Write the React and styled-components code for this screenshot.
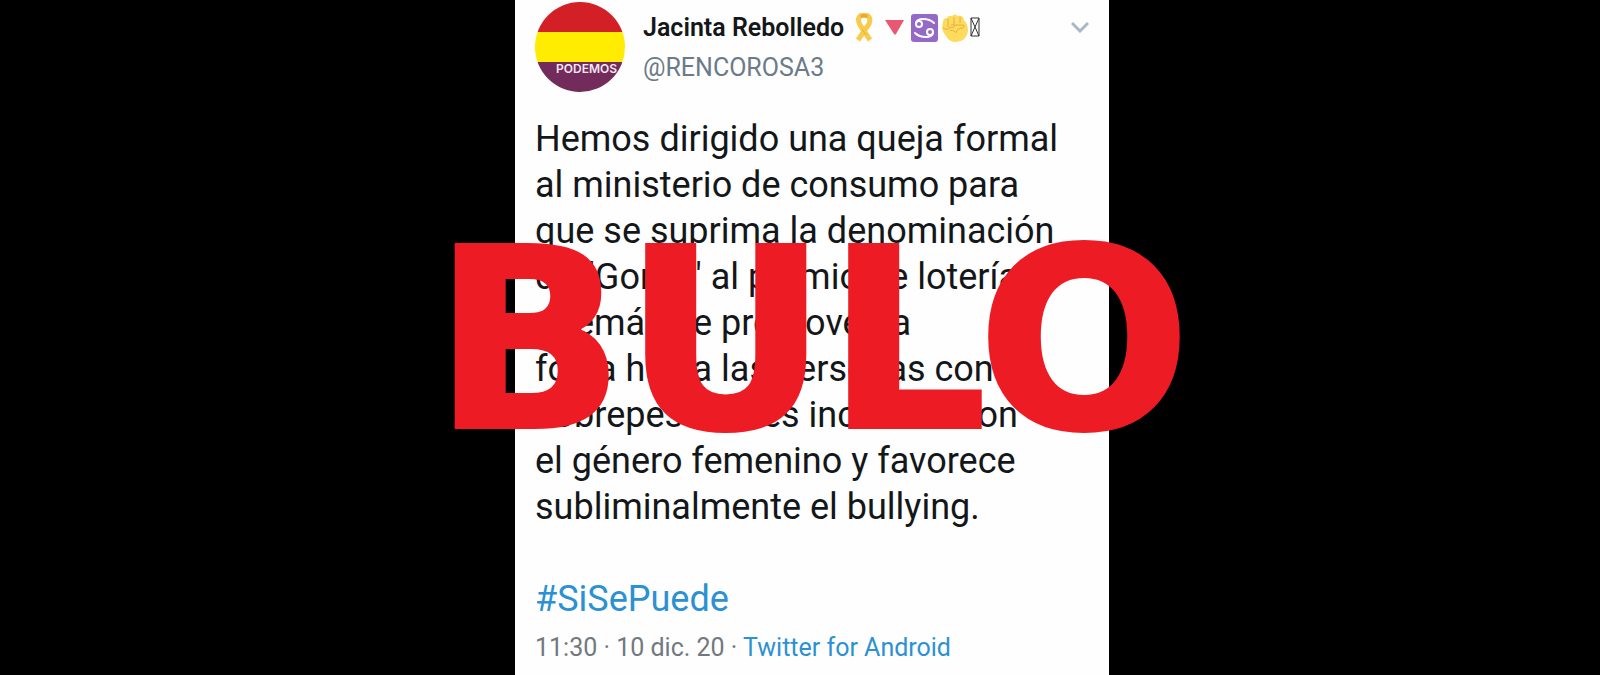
import React from 'react';
import styled, { createGlobalStyle } from 'styled-components';

const GlobalStyle = createGlobalStyle`
  * { box-sizing: border-box; }
  body { margin: 0; background: #000; font-family: Roboto, "Liberation Sans", sans-serif; }
`;

const Page = styled.main`
  display: flex;
  justify-content: center;
  min-height: 100vh;
  padding-left: 24px;
  background: #000;
  overflow: hidden;
`;

const Card = styled.article`
  position: relative;
  width: 100%;
  max-width: 594px;
  padding: 2px 20px 10px;
  background: #fefefe;
  color: #14171a;
`;

const Header = styled.header`
  display: flex;
  align-items: flex-start;
  gap: 18px;
  height: 114px;
`;

const Avatar = styled.div`
  flex: none;
  display: flex;
  flex-direction: column;
  width: 90px;
  height: 90px;
  border-radius: 50%;
  overflow: hidden;
`;

const Stripe = styled.div`
  flex: 1;
  padding-right: 8px;
  background: ${({ $color }) => $color};
  color: #f4e6f0;
  font: 600 12px/14px Inter, sans-serif;
  text-align: right;
`;

const Identity = styled.div`
  flex: 1;
  padding-top: 6px;
  font-size: 25px;
  line-height: 40px;
  white-space: nowrap;
`;

const NameRow = styled.div`
  display: flex;
  align-items: center;
`;

const Name = styled.h1`
  margin: 0 8px 0 0;
  font-size: 25px;
  font-weight: 600;
  line-height: 40px;
`;

const Badges = styled.svg`
  display: block;
  width: 130px;
  height: 30px;
`;

const Handle = styled.div`
  color: #6b7b88;
`;

const MenuButton = styled.button`
  display: flex;
  align-items: center;
  height: 50px;
  padding: 0;
  border: 0;
  background: none;
  color: #aab8c2;
`;

const Body = styled.p`
  margin: 0;
  font-size: 36px;
  line-height: 46px;
  white-space: pre-line;
`;

const TextLink = styled.a`
  color: #2b91d3;
  text-decoration: none;
`;

const Meta = styled.footer`
  margin-top: 10px;
  color: #71797f;
  font-size: 25px;
  line-height: 32px;
`;

const Stamp = styled.strong`
  position: absolute;
  top: 341px;
  left: 50%;
  transform: translate(-50%, -50%);
  color: #ed1c24;
  font: 700 250px/1 "DejaVu Sans", sans-serif;
  -webkit-text-stroke: 4px #ed1c24;
  pointer-events: none;
`;

const message = `Hemos dirigido una queja formal
al ministerio de consumo para
que se suprima la denominación
de "Gordo" al premio de lotería
además de promover la
fobia hacia las personas con
sobrepeso no es inclusivo con
el género femenino y favorece
subliminalmente el bullying.

`;

function NameBadges() {
  return (
    <Badges viewBox="0 0 130 30" aria-hidden="true">
      <path d="M6 27 L17 11 Q19 5 16 3 Q12 1 8 3 Q5 6 8 12 L18 27" fill="none" stroke="#f9cb4c" strokeWidth="5" strokeLinejoin="round" />
      <path d="M8 2 Q12 0 16 2 L15 5 Q12 4 9 5Z" fill="#eda62f" />
      <path d="M10 16 L14 22" stroke="#e9ac38" strokeWidth="1" />
      <path d="M33 7 H52 L44 21 Q43 22 42 21Z" fill="#e95770" />
      <rect x="59" y="1" width="27" height="28" rx="3" fill="#9569c7" />
      <g fill="none" stroke="#fff" strokeWidth="2">
        <circle cx="67" cy="11" r="3" />
        <path d="M64 10 Q65 6 71 6 Q78 6 82 10" strokeLinecap="round" />
        <circle cx="78" cy="19" r="3" />
        <path d="M81 20 Q80 24 74 24 Q67 24 63 20" strokeLinecap="round" />
      </g>
      <path d="M91 9 Q91 5 95 5 Q96 2 100 3 Q103 0 106 3 Q111 2 112 7 Q116 11 116 18 Q115 28 104 29 Q97 29 94 23 Q91 20 90 15Z" fill="#fddb5c" />
      <path d="M96 6 V14 M102 4 V12 M108 4 V10 M91 15 Q96 18 98 14 Q102 16 103 12 M99 12 H110 Q114 12 111 15 Q105 15 104 20 M98 17 Q101 17 103 19" fill="none" stroke="#e9ac45" strokeWidth="1" />
      <path d="M119 5 H127 V23 H119Z L127 23 M127 5 L119 23" fill="none" stroke="#333" strokeWidth="1" />
    </Badges>
  );
}

export default function App() {
  return (
    <>
      <GlobalStyle />
      <Page>
        <Card>
          <Header>
            <Avatar>
              <Stripe $color="#d22026" />
              <Stripe $color="#ffec00" />
              <Stripe $color="#722b5b">PODEMOS</Stripe>
            </Avatar>
            <Identity>
              <NameRow>
                <Name>Jacinta Rebolledo</Name>
                <NameBadges />
              </NameRow>
              <Handle>@RENCOROSA3</Handle>
            </Identity>
            <MenuButton type="button" aria-label="Más opciones">
              <svg width="18" height="12" viewBox="0 0 18 12" fill="none" stroke="currentColor" strokeWidth="3">
                <path d="M1 2 L9 10 L17 2" />
              </svg>
            </MenuButton>
          </Header>
          <Body>
            {message}
            <TextLink href="#SiSePuede">#SiSePuede</TextLink>
          </Body>
          <Meta>
            11:30 · 10 dic. 20 · <TextLink href="#android">Twitter for Android</TextLink>
          </Meta>
          <Stamp>BULO</Stamp>
        </Card>
      </Page>
    </>
  );
}
